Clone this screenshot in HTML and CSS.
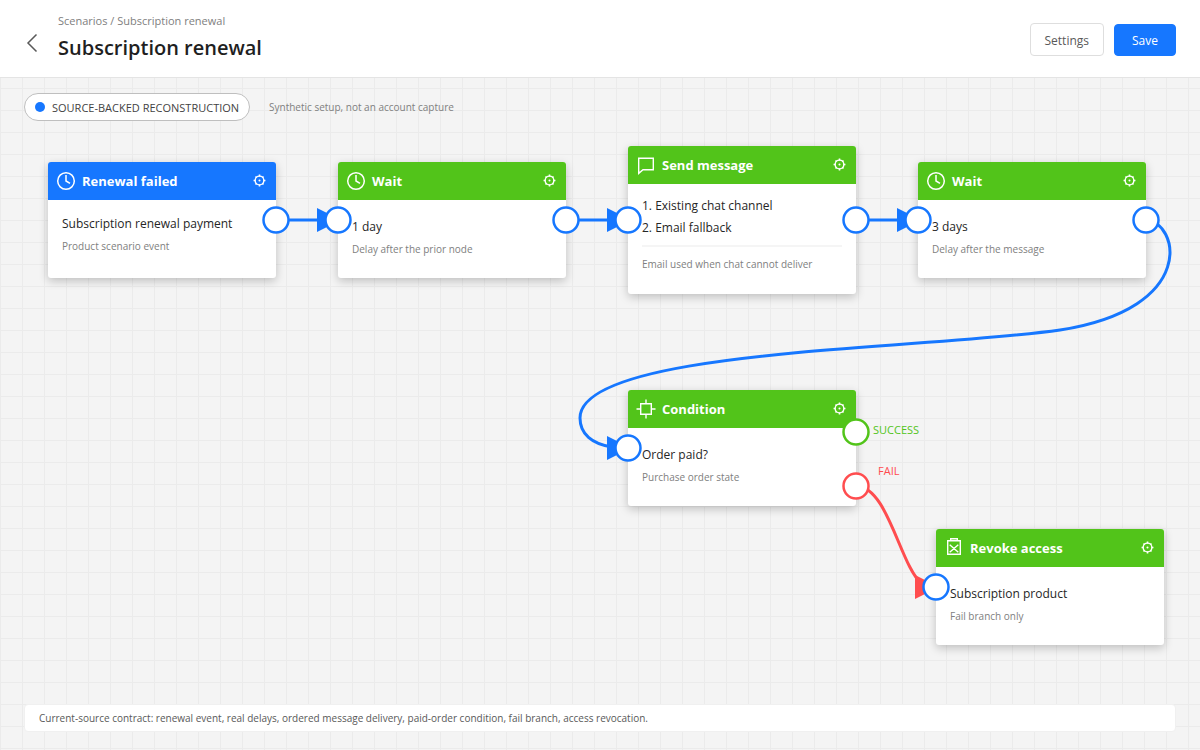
FILE: index.html
```html
<!DOCTYPE html>
<html lang="en">
<head>
<meta charset="utf-8">
<meta name="viewport" content="width=device-width, initial-scale=1">
<title>Subscription renewal</title>
<link rel="stylesheet" href="styles.css">
</head>
<body>
<svg class="defs" aria-hidden="true">
  <symbol id="gear" viewBox="0 0 14 14">
    <circle cx="7" cy="7" r="4.7" fill="none" stroke="currentColor" stroke-width="1.5"/>
    <path d="M7 .6v2M7 11.4v2M.6 7h2M11.4 7h2M2.7 2.7l1.2 1.2M10.1 10.1l1.2 1.2M2.7 11.3l1.2-1.2M10.1 3.9l1.2-1.2" fill="none" stroke="currentColor" stroke-width="1.7"/>
    <circle cx="7" cy="7" r="1.1" fill="currentColor"/>
  </symbol>
  <symbol id="clock" viewBox="0 0 20 20">
    <circle cx="10" cy="10" r="8.3" fill="none" stroke="currentColor" stroke-width="1.5"/>
    <path d="M10 4v6l4 2.4" fill="none" stroke="currentColor" stroke-width="1.5"/>
  </symbol>
  <symbol id="chat" viewBox="0 0 20 20">
    <path d="M2.7 3.2h14.6v11.6H7l-4.3 3.6z" fill="none" stroke="currentColor" stroke-width="1.4"/>
  </symbol>
  <symbol id="condition" viewBox="0 0 20 20">
    <path d="M4.7 4.7h10.6v10.6H4.7zM10 .5v4.2M10 15.3v4.2M.5 10h4.2M15.3 10h4.2" fill="none" stroke="currentColor" stroke-width="1.4"/>
  </symbol>
  <symbol id="revoke" viewBox="0 0 20 20">
    <path d="M3.7 2.7h12.6v13.6H3.7zM6.7 2.7V.7h6.6v2M5.7 6.7l8.6 7.5M14.3 6.7l-8.6 7.5" fill="none" stroke="currentColor" stroke-width="1.4"/>
  </symbol>
</svg>

<header class="topbar">
  <button class="back" type="button" aria-label="Back">
    <svg width="12" height="20" viewBox="0 0 12 20"><path d="M10.5 1.5L2 10l8.5 8.5" fill="none" stroke="#595959" stroke-width="1.5"/></svg>
  </button>
  <div class="heading">
    <nav class="crumbs">Scenarios / Subscription renewal</nav>
    <h1 class="title">Subscription renewal</h1>
  </div>
  <button class="btn" type="button">Settings</button>
  <button class="btn btn-primary" type="button">Save</button>
</header>

<main class="canvas">
  <div class="meta">
    <span class="badge"><i class="dot"></i>SOURCE-BACKED RECONSTRUCTION</span>
    <span class="hint">Synthetic setup, not an account capture</span>
  </div>

  <svg class="layer" width="1200" height="672" viewBox="0 78 1200 672" aria-hidden="true">
    <g fill="none" stroke="#1677ff" stroke-width="3">
      <path d="M276 220H322M566 220H612M856 220H902"/>
      <path d="M1146 220C1178 221 1200 308 1060 330C920 350 580 349 580 418C580 434 592 444 612 447"/>
    </g>
    <path d="M856 486C888 486 900 566 922 584" fill="none" stroke="#ff4d4f" stroke-width="3"/>
    <path d="M317 208l24 12-24 12zM607 208l24 12-24 12zM897 208l24 12-24 12zM607 436l24 12-24 12z" fill="#1677ff"/>
    <path d="M915 575l24 12-24 12z" fill="#ff4d4f"/>
  </svg>

  <article class="node n-event">
    <header class="node-head event"><svg class="kind"><use href="#clock"/></svg><h2 class="node-title">Renewal failed</h2><button class="gear" type="button" aria-label="Configure Renewal failed"><svg><use href="#gear"/></svg></button></header>
    <div class="node-body first"><p class="main">Subscription renewal payment</p><p class="sub">Product scenario event</p></div>
  </article>
  <article class="node n-wait1">
    <header class="node-head"><svg class="kind"><use href="#clock"/></svg><h2 class="node-title">Wait</h2><button class="gear" type="button" aria-label="Configure Wait"><svg><use href="#gear"/></svg></button></header>
    <div class="node-body"><p class="main">1 day</p><p class="sub">Delay after the prior node</p></div>
  </article>
  <article class="node n-send">
    <header class="node-head"><svg class="kind"><use href="#chat"/></svg><h2 class="node-title">Send message</h2><button class="gear" type="button" aria-label="Configure Send message"><svg><use href="#gear"/></svg></button></header>
    <div class="node-body list"><p class="main">1. Existing chat channel</p><p class="main">2. Email fallback</p><p class="sub ruled">Email used when chat cannot deliver</p></div>
  </article>
  <article class="node n-wait2">
    <header class="node-head"><svg class="kind"><use href="#clock"/></svg><h2 class="node-title">Wait</h2><button class="gear" type="button" aria-label="Configure Wait"><svg><use href="#gear"/></svg></button></header>
    <div class="node-body"><p class="main">3 days</p><p class="sub">Delay after the message</p></div>
  </article>
  <article class="node n-cond">
    <header class="node-head"><svg class="kind"><use href="#condition"/></svg><h2 class="node-title">Condition</h2><button class="gear" type="button" aria-label="Configure Condition"><svg><use href="#gear"/></svg></button></header>
    <div class="node-body"><p class="main">Order paid?</p><p class="sub">Purchase order state</p></div>
  </article>
  <article class="node n-revoke">
    <header class="node-head"><svg class="kind"><use href="#revoke"/></svg><h2 class="node-title">Revoke access</h2><button class="gear" type="button" aria-label="Configure Revoke access"><svg><use href="#gear"/></svg></button></header>
    <div class="node-body"><p class="main">Subscription product</p><p class="sub">Fail branch only</p></div>
  </article>

  <svg class="layer" width="1200" height="672" viewBox="0 78 1200 672" aria-hidden="true">
    <g fill="#fff" stroke="#1677ff" stroke-width="2.5">
      <circle cx="276" cy="220" r="12.5"/><circle cx="338" cy="220" r="12.5"/>
      <circle cx="566" cy="220" r="12.5"/><circle cx="628" cy="220" r="12.5"/>
      <circle cx="856" cy="220" r="12.5"/><circle cx="918" cy="220" r="12.5"/>
      <circle cx="1146" cy="220" r="12.5"/><circle cx="628" cy="448" r="12.5"/>
      <circle cx="936" cy="587" r="12.5"/>
      <circle cx="856" cy="432" r="12.5" stroke="#52c41a"/>
      <circle cx="856" cy="486" r="12.5" stroke="#ff4d4f"/>
    </g>
  </svg>
  <span class="port-label success">SUCCESS</span>
  <span class="port-label fail">FAIL</span>

  <p class="note">Current-source contract: renewal event, real delays, ordered message delivery, paid-order condition, fail branch, access revocation.</p>
</main>
</body>
</html>
```
FILE: styles.css
```css
* { box-sizing: border-box; }
body {
  margin: 0;
  min-height: 100vh;
  display: flex;
  flex-direction: column;
  font-family: "Segoe UI", "Open Sans", "Noto Sans", sans-serif;
  font-size: 12px;
  color: #262626;
  background-color: #f4f4f4;
  background-image:
    linear-gradient(#ebebeb 1px, transparent 1px),
    linear-gradient(90deg, #ebebeb 1px, transparent 1px);
  background-size: 22px 22px;
}
h1, h2, p { margin: 0; }
button { font-family: inherit; cursor: pointer; }
.defs { position: absolute; width: 0; height: 0; }

.topbar {
  display: flex;
  align-items: center;
  gap: 10px;
  height: 78px;
  padding: 2px 24px 0 20px;
  background: #fff;
  border-bottom: 1px solid #e4e4e4;
}
.back {
  display: grid;
  place-items: center;
  width: 24px;
  height: 32px;
  margin-top: 6px;
  padding: 0;
  border: 0;
  background: none;
}
.heading { flex: 1; padding: 0 4px 5px; }
.crumbs { font-size: 11px; line-height: 18px; color: #808080; }
.title { margin-top: 4px; font-size: 20px; line-height: 28px; font-weight: 600; color: #1f1f1f; }
.btn {
  height: 33px;
  padding: 2px 14px 0;
  border: 1px solid #dedede;
  border-radius: 4px;
  background: #fff;
  color: #595959;
  font-size: 12px;
}
.btn-primary {
  height: 32px;
  padding: 2px 17px 0;
  border-color: #1677ff;
  background: #1677ff;
  color: #fff;
}

.canvas {
  position: relative;
  flex: 1;
  display: flex;
  flex-direction: column;
  padding: 15px 24px 18px;
}
.meta { display: flex; align-items: center; gap: 19px; }
.badge {
  display: flex;
  align-items: center;
  gap: 7px;
  width: 226px;
  height: 28px;
  padding-left: 10px;
  border: 1px solid #bfbfbf;
  border-radius: 14px;
  background: #fff;
  color: #434343;
  font-size: 11px;
  white-space: nowrap;
}
.dot { flex: none; width: 10px; height: 10px; border-radius: 50%; background: #1677ff; }
.hint { font-size: 10px; color: #808080; }

.layer { position: absolute; left: 0; top: 0; overflow: visible; pointer-events: none; }

.node {
  position: absolute;
  width: 228px;
  min-height: 116px;
  border-radius: 3px;
  background: #fff;
  box-shadow: 0 3px 10px rgba(0, 0, 0, 0.22);
}
.n-event { left: 48px; top: 84px; }
.n-wait1 { left: 338px; top: 84px; }
.n-send { left: 628px; top: 68px; min-height: 148px; }
.n-wait2 { left: 918px; top: 84px; }
.n-cond { left: 628px; top: 312px; }
.n-revoke { left: 936px; top: 451px; }

.node-head {
  display: flex;
  align-items: center;
  gap: 6px;
  height: 38px;
  padding: 0 10px 0 8px;
  border-radius: 3px 3px 0 0;
  background: #52c41a;
  color: #fff;
}
.event { background: #1677ff; }
.kind { width: 20px; height: 20px; }
.node-title { flex: 1; font-size: 13px; line-height: 20px; font-weight: 700; }
.gear { display: grid; padding: 0 0 2px; border: 0; background: none; color: inherit; }
.gear svg { width: 13px; height: 13px; }
.node-body { padding: 16px 14px; }
.first { padding-top: 13px; }
.list { padding-top: 11px; }
.main { font-size: 12px; line-height: 22px; }
.sub { margin-top: 2px; font-size: 10px; line-height: 18px; color: #808080; }
.ruled { margin-top: 6px; padding-top: 8px; border-top: 2px solid #f5f5f5; }

.port-label { position: absolute; font-size: 11px; line-height: 16px; }
.success { left: 873px; top: 344px; color: #52c41a; }
.fail { left: 878px; top: 385px; color: #ff4d4f; }

.note {
  margin-top: auto;
  padding: 5px 14px;
  border: 1px solid #f0f0f0;
  border-radius: 4px;
  background: #fff;
  color: #595959;
  font-size: 10px;
  line-height: 16px;
}
```
